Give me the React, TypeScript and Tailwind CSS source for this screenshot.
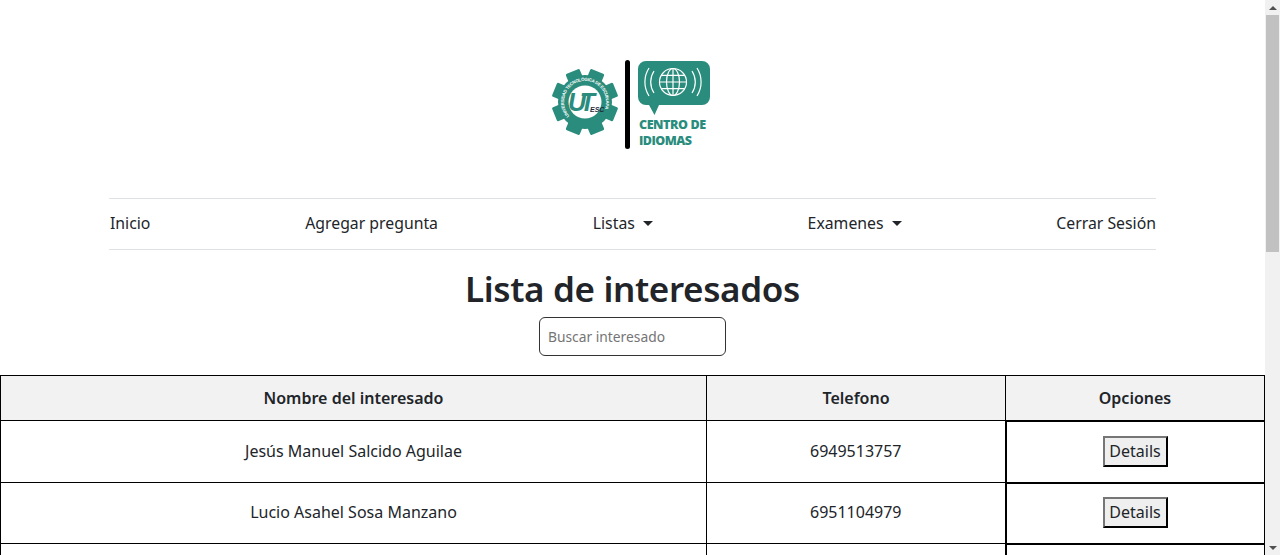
const interesados = [
  { nombre: "Jesús Manuel Salcido Aguilae", telefono: "6949513757", alto: "h-[62px]" },
  { nombre: "Lucio Asahel Sosa Manzano", telefono: "6951104979", alto: "h-[61px]" },
];

function Logo() {
  const teeth = [0, 45, 90, 135, 180, 225, 270, 315];
  return (
    <svg width="160" height="92" viewBox="0 0 160 92" className="block">
      {/* Gear */}
      <g transform="translate(34 43)">
        {teeth.map((deg) => (
          <rect key={deg} x="-7.500" y="-33" width="15" height="12" rx="1.500" fill="#2a8c7c" transform={`rotate(${deg + 22.5})`} />
        ))}
        <circle r="27" fill="#2a8c7c" />
        <circle r="16.500" fill="#fff" />
        <path id="gearArc" d="M-15.500 14a21 21 0 1 1 31 0" fill="none" />
        <text fontFamily="Liberation Sans, sans-serif" fontSize="4.400" fontWeight="700" fill="#fff">
          <textPath href="#gearArc" startOffset="0" textLength="88">UNIVERSIDAD TECNOLÓGICA DE ESCUINAPA</textPath>
        </text>
        <text x="-17" y="9" fontFamily="Liberation Sans, sans-serif" fontSize="25" fontWeight="700" fontStyle="italic" fill="#2a8c7c" textLength="27">UT</text>
        <text x="5" y="10" fontFamily="Liberation Sans, sans-serif" fontSize="7" fontWeight="700" fontStyle="italic" fill="#1f2937">ESC</text>
      </g>
      {/* Separator */}
      <rect x="74" y="1" width="5" height="89" rx="2.500" fill="#000" />
      {/* Speech bubble with globe */}
      <path d="M95 2h56a8 8 0 0 1 8 8v28a8 8 0 0 1-8 8h-43l-4.500 10-5.500-10h-3a8 8 0 0 1-8-8v-28a8 8 0 0 1 8-8z" fill="#2a8c7c" />
      <g fill="none" stroke="#fff" strokeWidth="1.200" transform="translate(122 23)">
        <circle r="13.500" />
        <ellipse rx="6.500" ry="13.500" />
        <path d="M0-13.500v27M-13.500 0h27M-11.700-6.700h23.400M-11.700 6.700h23.400" />
        <path d="M-19-11a20 20 0 0 0 0 22M-24-14a26 26 0 0 0 0 28M19-11a20 20 0 0 1 0 22M24-14a26 26 0 0 1 0 28" />
      </g>
      <text x="88" y="70" fontFamily="Open Sans, sans-serif" fontSize="12.500" fontWeight="800" fill="#2a8c7c" textLength="67">CENTRO DE</text>
      <text x="88" y="86" fontFamily="Open Sans, sans-serif" fontSize="12.500" fontWeight="800" fill="#2a8c7c" textLength="53">IDIOMAS</text>
    </svg>
  );
}

function Caret() {
  return <span className="ml-[8px] inline-block align-[3px] border-x-[5px] border-t-[5px] border-x-transparent border-t-[#212529]" />;
}

function Scrollbar() {
  return (
    <aside className="flex w-[15px] shrink-0 flex-col items-center bg-[#f1f1f1]">
      <div className="flex h-[15px] w-full items-center justify-center">
        <span className="border-x-[4px] border-b-[4px] border-x-transparent border-b-[#505050]" />
      </div>
      <div className="h-[237px] w-[13px] bg-[#c1c1c1]" />
      <div className="flex-1" />
      <div className="flex h-[15px] w-full items-center justify-center">
        <span className="border-x-[4px] border-t-[4px] border-x-transparent border-t-[#505050]" />
      </div>
    </aside>
  );
}

export default function App() {
  return (
    <div className="flex h-[555px] overflow-hidden bg-white font-['Noto_Sans',sans-serif] text-[#212529]">
      <main className="w-[1265px] shrink-0">
        {/* Logo */}
        <div className="flex justify-center pt-[59px] pr-[3px]">
          <Logo />
        </div>

        {/* Nav */}
        <nav className="mx-[109px] mt-[47px] flex h-[52px] items-center justify-between border-y border-[#dee2e6] pb-px text-[15.800px]">
          <a className="pl-px">Inicio</a>
          <a>Agregar pregunta</a>
          <a>Listas<Caret /></a>
          <a>Examenes<Caret /></a>
          <a>Cerrar Sesión</a>
        </nav>

        <h1 className="mt-[15px] text-center text-[35px] leading-[48px] font-semibold tracking-[-0.35px]">Lista de interesados</h1>

        <div className="mt-[4px] flex justify-center">
          <input
            placeholder="Buscar interesado"
            className="h-[39px] w-[187px] rounded-[6px] border border-[#333] px-[8px] text-[13.800px] placeholder:text-[#757575]"
          />
        </div>

        {/* Table */}
        <table className="mt-[19px] w-[1264px] table-fixed border-collapse border border-black text-[16px]">
          <colgroup>
            <col className="w-[706px]" />
            <col className="w-[299px]" />
            <col className="w-[259px]" />
          </colgroup>
          <thead>
            <tr className="h-[45px] bg-[#f2f2f2]">
              <th className="border border-black font-semibold">Nombre del interesado</th>
              <th className="border border-black font-semibold">Telefono</th>
              <th className="border border-black font-semibold">Opciones</th>
            </tr>
          </thead>
          <tbody>
            {interesados.map((i) => (
              <tr key={i.telefono} className={`${i.alto} text-center`}>
                <td className="border border-black pb-[2px]">{i.nombre}</td>
                <td className="border border-black pb-[2px]">{i.telefono}</td>
                <td className="border-2 border-black pb-px">
                  <button className="h-[31px] w-[65px] border-2 border-t-[#767676] border-r-black border-b-black border-l-[#767676] bg-[#efefef] pb-px">Details</button>
                </td>
              </tr>
            ))}
            <tr className="h-[61px]">
              <td className="border border-black" />
              <td className="border border-black" />
              <td className="border-2 border-black" />
            </tr>
          </tbody>
        </table>
      </main>
      <Scrollbar />
    </div>
  );
}
